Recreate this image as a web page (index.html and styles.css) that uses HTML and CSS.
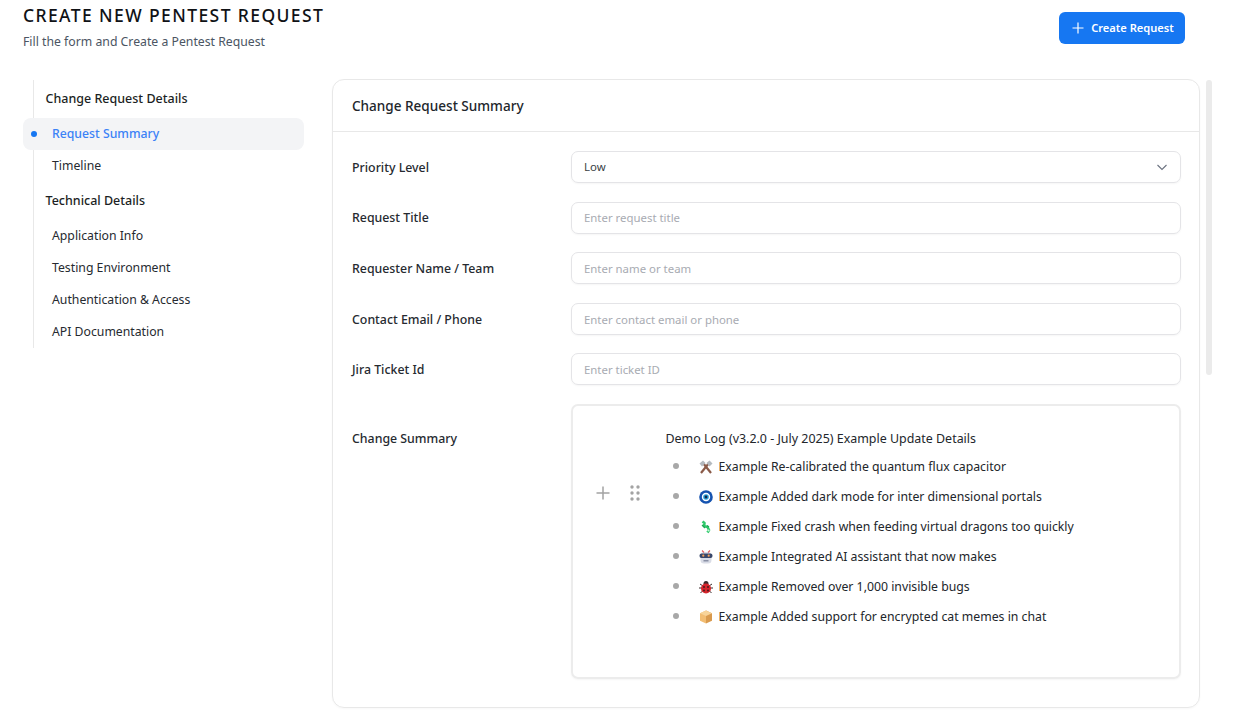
FILE: index.html
```html
<!DOCTYPE html>
<html lang="en">
<head>
<meta charset="utf-8">
<title>Create New Pentest Request</title>
<link rel="stylesheet" href="styles.css">
</head>
<body>
<div class="page">
  <header class="top">
    <div>
      <h1 class="title">CREATE NEW PENTEST REQUEST</h1>
      <p class="subtitle">Fill the form and Create a Pentest Request</p>
    </div>
    <button class="primary" type="button">
      <svg class="plus-icon" viewBox="0 0 12 12" width="12" height="12"><path d="M6 .5v11M.5 6h11" fill="none" stroke="#fff" stroke-width="1.200"/></svg>
      Create Request
    </button>
  </header>
  <div class="body">
    <nav class="side">
      <div class="side-group">Change Request Details</div>
      <a class="side-item active">Request Summary</a>
      <a class="side-item">Timeline</a>
      <div class="side-group second">Technical Details</div>
      <a class="side-item">Application Info</a>
      <a class="side-item">Testing Environment</a>
      <a class="side-item">Authentication &amp; Access</a>
      <a class="side-item">API Documentation</a>
    </nav>
    <section class="card">
      <h2 class="card-head">Change Request Summary</h2>
      <div class="form">
        <div class="row">
          <label class="lab">Priority Level</label>
          <div class="field value"><span class="field-text">Low</span>
            <svg viewBox="0 0 12 12" width="12" height="12"><path d="M1.500 4l4.500 4.500L10.500 4" fill="none" stroke="#6b7280" stroke-width="1.100"/></svg>
          </div>
        </div>
        <div class="row"><label class="lab">Request Title</label><div class="field"><span class="field-text">Enter request title</span></div></div>
        <div class="row"><label class="lab">Requester Name / Team</label><div class="field"><span class="field-text">Enter name or team</span></div></div>
        <div class="row"><label class="lab">Contact Email / Phone</label><div class="field"><span class="field-text">Enter contact email or phone</span></div></div>
        <div class="row"><label class="lab">Jira Ticket Id</label><div class="field"><span class="field-text">Enter ticket ID</span></div></div>
        <div class="row editor-row">
          <label class="lab editor-lab">Change Summary</label>
          <div class="editor">
            <div class="tools">
              <svg viewBox="0 0 14 14" width="14" height="14"><path d="M7 .5v13M.5 7h13" fill="none" stroke="#a3a3a3" stroke-width="1.500"/></svg>
              <svg viewBox="0 0 10 16" width="10" height="16"><g fill="#a3a3a3"><circle cx="2" cy="2" r="1.700"/><circle cx="8" cy="2" r="1.700"/><circle cx="2" cy="8" r="1.700"/><circle cx="8" cy="8" r="1.700"/><circle cx="2" cy="14" r="1.700"/><circle cx="8" cy="14" r="1.700"/></g></svg>
            </div>
            <div class="doc">
              <p class="doc-title">Demo Log (v3.2.0 - July 2025) Example Update Details</p>
              <ul class="log">
                <li>
                  <svg class="emo" viewBox="0 0 14 14"><path d="M4 3l8 10" stroke="#8a5a48" stroke-width="2.200"/><path d="M10 3L2 13" stroke="#8a5a48" stroke-width="2.200"/><path d="M.5 3.500L4 .5l2.500 2.500L3 6.500z" fill="#b4bac0"/><path d="M7.500 3L10.500 .5l3 3-3 3z" fill="#b4bac0"/></svg>
                  <span>Example Re-calibrated the quantum flux capacitor</span></li>
                <li>
                  <svg class="emo" viewBox="0 0 14 14"><circle cx="7" cy="7" r="6.800" fill="#1553b0"/><circle cx="7" cy="7" r="4.200" fill="#fff"/><circle cx="7" cy="7" r="2.800" fill="#2a9fd8"/><circle cx="7" cy="7" r="1.400" fill="#10264a"/></svg>
                  <span>Example Added dark mode for inter dimensional portals</span></li>
                <li>
                  <svg class="emo" viewBox="0 0 14 14"><path d="M3.500 1.500l2 1.500-.5 3 3.500 1 1.500 3-1.500 2.500" fill="none" stroke="#2fc96b" stroke-width="2.600" stroke-linejoin="round"/><path d="M3 5l3 3M8 5.500l2 1.500" stroke="#1ea653" stroke-width="1.200"/><circle cx="9.500" cy="10.500" r="1.100" fill="#c8f7da"/></svg>
                  <span>Example Fixed crash when feeding virtual dragons too quickly</span></li>
                <li>
                  <svg class="emo" viewBox="0 0 14 14"><rect x="1.500" y="2" width="11" height="11.500" rx="3.500" fill="#d9dce6"/><rect x=".5" y="3.500" width="13" height="4.500" rx="2" fill="#39476a"/><circle cx="4.300" cy="5.700" r="1.100" fill="#f5a05a"/><circle cx="9.700" cy="5.700" r="1.100" fill="#f5a05a"/><path d="M3 .5l2 2M11 .5L9 2.500" stroke="#e05a5a" stroke-width="1.100"/><rect x="4.500" y="10" width="5" height="1.500" fill="#8a90a5"/></svg>
                  <span>Example Integrated AI assistant that now makes</span></li>
                <li>
                  <svg class="emo" viewBox="0 0 14 14"><path d="M1 4l3 2M13 4l-3 2M0 8h3M14 8h-3M1.500 13L4 10.500M12.500 13L10 10.500" stroke="#3a2a2a" stroke-width="1"/><circle cx="7" cy="3.500" r="2.500" fill="#3a2a2a"/><circle cx="7" cy="8.500" r="5" fill="#d5252c"/><circle cx="5" cy="7" r=".9" fill="#3a1a1a"/><circle cx="9" cy="7" r=".9" fill="#3a1a1a"/><circle cx="5" cy="10.500" r=".9" fill="#3a1a1a"/><circle cx="9" cy="10.500" r=".9" fill="#3a1a1a"/></svg>
                  <span>Example Removed over 1,000 invisible bugs</span></li>
                <li>
                  <svg class="emo" viewBox="0 0 14 14"><path d="M7 .5l6 2.800v7.400L7 13.500z" fill="#d99a4e"/><path d="M7 .5L1 3.300v7.400l6 2.800z" fill="#f2bd73"/><path d="M1 3.300L7 6l6-2.700L7 .5z" fill="#f8d49a"/></svg>
                  <span>Example Added support for encrypted cat memes in chat</span></li>
              </ul>
            </div>
          </div>
        </div>
      </div>
    </section>
    <div class="scroll"><div class="thumb"></div></div>
  </div>
</div>
</body>
</html>
```
FILE: styles.css
```css
* { box-sizing: border-box; }
html, body { margin: 0; height: 100%; background: #fff; overflow: hidden; }
body { font-family: "Noto Sans", "Open Sans", "Liberation Sans", sans-serif; color: #1f2328; }
.page { width: 1248px; height: 727px; padding: 0 36px 0 23px; }
.top { display: flex; justify-content: space-between; align-items: flex-start; height: 79px; padding: 4px 27px 0 0; }
.title { margin: 0; font-size: 17.500px; font-weight: 500; letter-spacing: 1.400px; line-height: 22px; color: #101216; }
.subtitle { margin: 7px 0 0; font-size: 12.250px; line-height: 17px; color: #4b5563; }
.primary { margin-top: 8px; width: 126px; height: 32px; border: 0; border-radius: 6px; background: #1677f2; color: #fff; font: 600 11.100px "Noto Sans", sans-serif; display: flex; align-items: center; justify-content: center; gap: 7px; padding: 0 0 2px 2px; }
.plus-icon { margin-top: 2px; }
.body { display: flex; align-items: flex-start; }
.side { width: 281px; margin-right: 28px; position: relative; padding-top: 2px; height: 269px; }
.side::before { content: ""; position: absolute; left: 10px; top: 1px; bottom: 0; width: 1px; background: #e8e8e8; }
.side-group { font-size: 12.500px; font-weight: 500; line-height: 32px; height: 32px; padding-left: 22.500px; color: #1c1f24; margin-top: 2px; }
.side-group.second { margin-top: 3px; }
.side-item { display: block; height: 32px; line-height: 32px; font-size: 12.250px; padding-left: 29px; color: #262a30; border-radius: 8px; position: relative; }
.side-group.second + .side-item { margin-top: 3px; }
.side-item.active { background: #f3f4f6; color: #3b82f6; font-weight: 500; margin-top: 3px; }
.side-item.active::before { content: ""; position: absolute; left: 8px; top: 13px; width: 6px; height: 6px; border-radius: 50%; background: #1677f2; }
.card { width: 868px; height: 629px; border: 1px solid #e8e8e8; border-radius: 12px; box-shadow: 0 1px 2px rgba(0,0,0,.03); }
.card-head { margin: 0; height: 52px; line-height: 53px; padding-left: 19px; font-size: 13.550px; font-weight: 500; color: #22262b; border-bottom: 1px solid #e8e8e8; }
.form { padding: 19px 18px 0 19px; display: flex; flex-direction: column; gap: 18.600px; }
.row { display: flex; align-items: center; height: 32px; }
.lab { width: 219px; font-size: 12.350px; font-weight: 500; color: #262a30; }
.row:nth-child(4) .lab { padding-top: 1px; }
.field { width: 610px; height: 32px; border: 1px solid #e4e4e7; border-radius: 7px; padding: 0 12px; display: flex; align-items: center; justify-content: space-between; font-size: 11.400px; color: #a8abb2; box-shadow: 0 1px 2px rgba(0,0,0,.04); }
.field.value { color: #3a3f46; }
.field-text { margin-top: -1px; }
.row:nth-child(n+3) .field-text { margin-top: 1px; }
.editor-row { height: 275px; align-items: flex-start; }
.editor-lab { margin-top: 26px; }
.editor { width: 610px; height: 275px; border: 2px solid #ececec; border-radius: 7px; position: relative; padding: 23px 0 0 92.500px; box-shadow: 0 1px 2px rgba(0,0,0,.04); }
.tools { position: absolute; left: 23px; top: 79px; display: flex; align-items: center; gap: 20px; }
.doc-title { margin: 0 0 3px; font-size: 12.450px; line-height: 20px; color: #22262b; }
.log { margin: 0; padding: 0 0 0 33.500px; list-style: none; }
.log li { height: 30px; display: flex; align-items: center; gap: 5.500px; font-size: 12.280px; color: #22262b; position: relative; }
.log li::before { content: ""; position: absolute; left: -26px; top: 11px; width: 6px; height: 6px; border-radius: 50%; background: #a8a8a8; }
.emo { width: 14px; height: 14px; flex: none; }
.scroll { width: 6px; margin-left: 6px; height: 648px; }
.thumb { height: 295px; margin-top: 1px; background: #ebebeb; border-radius: 3px; }
```
